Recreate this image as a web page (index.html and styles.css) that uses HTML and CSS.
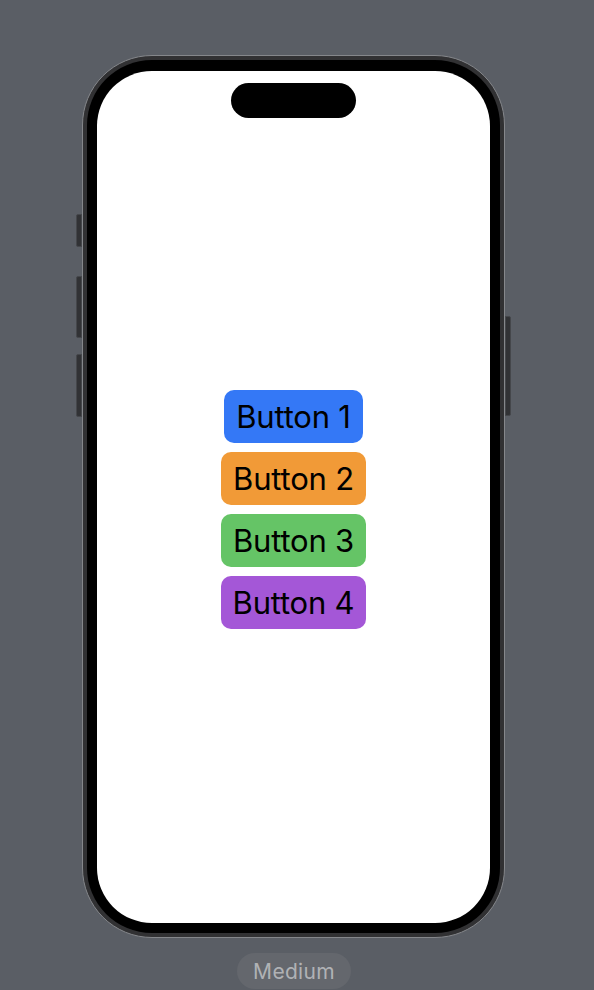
FILE: index.html
```html
<!DOCTYPE html>
<html>
<head>
<meta charset="utf-8">
<link rel="stylesheet" href="styles.css">
</head>
<body>
<div class="stage">
  <div class="phone">
    <span class="side side-action"></span>
    <span class="side side-volup"></span>
    <span class="side side-voldown"></span>
    <span class="side side-power"></span>
    <div class="bezel">
      <div class="screen">
        <div class="island"></div>
        <div class="stack">
          <div class="btn btn-blue">Button 1</div>
          <div class="btn btn-orange">Button 2</div>
          <div class="btn btn-green">Button 3</div>
          <div class="btn btn-purple">Button 4</div>
        </div>
      </div>
    </div>
  </div>
  <div class="label">Medium</div>
</div>
</body>
</html>
```
FILE: styles.css
```css
html, body {
  margin: 0;
  padding: 0;
  background: #5a5e65;
  width: 594px;
  height: 990px;
  overflow: hidden;
}
.stage {
  display: flex;
  flex-direction: column;
  align-items: flex-start;
  padding-top: 55px;
}
.phone {
  position: relative;
  margin-left: 82px;
  width: 423px;
  height: 883px;
  box-sizing: border-box;
  border: 1px solid #85878b;
  border-radius: 70px;
  background: #313133;
  padding: 4px;
}
.side {
  position: absolute;
  width: 6px;
  background: #313235;
  border: 1px solid #45474b;
  box-sizing: border-box;
}
.side-action { left: -7px; top: 158px; height: 33px; border-radius: 2px 0 0 2px; }
.side-volup { left: -7px; top: 220px; height: 62px; border-radius: 2px 0 0 2px; }
.side-voldown { left: -7px; top: 298px; height: 63px; border-radius: 2px 0 0 2px; }
.side-power { right: -7px; top: 260px; height: 100px; border-radius: 0 2px 2px 0; }
.bezel {
  width: 100%;
  height: 100%;
  box-sizing: border-box;
  background: #000;
  border-radius: 65px;
  padding: 11px 10px 10px 10px;
}
.screen {
  width: 393px;
  height: 852px;
  background: #fff;
  border-radius: 55px;
  display: flex;
  flex-direction: column;
  align-items: center;
  padding-top: 12px;
  box-sizing: border-box;
}
.island {
  width: 125px;
  height: 35px;
  background: #000;
  border-radius: 18px;
}
.stack {
  margin-top: 272px;
  display: flex;
  flex-direction: column;
  align-items: center;
  gap: 9px;
}
.btn {
  height: 53px;
  box-sizing: border-box;
  padding: 0 12px;
  border-radius: 10px;
  display: flex;
  align-items: center;
  justify-content: center;
  font-family: Inter, "Liberation Sans", sans-serif;
  font-size: 31px;
  color: #000;
  letter-spacing: -0.2px;
}
.btn-blue { background: #3478f6; }
.btn-orange { background: #f19a37; }
.btn-green { background: #65c466; }
.btn-purple { background: #a457d7; }
.label {
  margin-top: 15px;
  margin-left: 237px;
  height: 36px;
  width: 114px;
  border-radius: 18px;
  background: #64676d;
  color: #b0b2b5;
  font-family: Inter, "Liberation Sans", sans-serif;
  font-size: 21px;
  letter-spacing: 0.3px;
  display: flex;
  align-items: center;
  justify-content: center;
}
```
